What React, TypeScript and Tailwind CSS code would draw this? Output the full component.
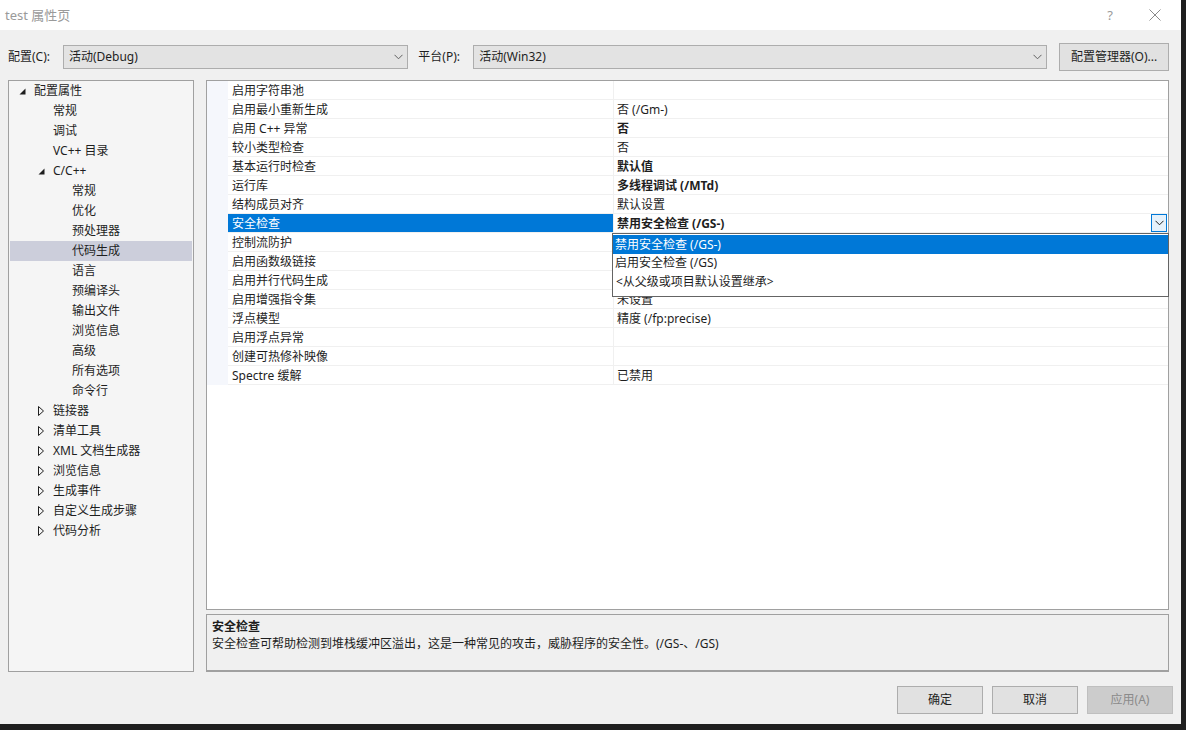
import React from 'react';

type TreeItem = { label: string; level: number; arrow?: 'open' | 'closed'; selected?: boolean };

const treeItems: TreeItem[] = [
  { label: '配置属性', level: 0, arrow: 'open' },
  { label: '常规', level: 1 },
  { label: '调试', level: 1 },
  { label: 'VC++ 目录', level: 1 },
  { label: 'C/C++', level: 1, arrow: 'open' },
  { label: '常规', level: 2 },
  { label: '优化', level: 2 },
  { label: '预处理器', level: 2 },
  { label: '代码生成', level: 2, selected: true },
  { label: '语言', level: 2 },
  { label: '预编译头', level: 2 },
  { label: '输出文件', level: 2 },
  { label: '浏览信息', level: 2 },
  { label: '高级', level: 2 },
  { label: '所有选项', level: 2 },
  { label: '命令行', level: 2 },
  { label: '链接器', level: 1, arrow: 'closed' },
  { label: '清单工具', level: 1, arrow: 'closed' },
  { label: 'XML 文档生成器', level: 1, arrow: 'closed' },
  { label: '浏览信息', level: 1, arrow: 'closed' },
  { label: '生成事件', level: 1, arrow: 'closed' },
  { label: '自定义生成步骤', level: 1, arrow: 'closed' },
  { label: '代码分析', level: 1, arrow: 'closed' },
];

type Prop = { name: string; value: string; bold?: boolean; selected?: boolean };

const props: Prop[] = [
  { name: '启用字符串池', value: '' },
  { name: '启用最小重新生成', value: '否 (/Gm-)' },
  { name: '启用 C++ 异常', value: '否', bold: true },
  { name: '较小类型检查', value: '否' },
  { name: '基本运行时检查', value: '默认值', bold: true },
  { name: '运行库', value: '多线程调试 (/MTd)', bold: true },
  { name: '结构成员对齐', value: '默认设置' },
  { name: '安全检查', value: '禁用安全检查 (/GS-)', bold: true, selected: true },
  { name: '控制流防护', value: '' },
  { name: '启用函数级链接', value: '' },
  { name: '启用并行代码生成', value: '' },
  { name: '启用增强指令集', value: '未设置' },
  { name: '浮点模型', value: '精度 (/fp:precise)' },
  { name: '启用浮点异常', value: '' },
  { name: '创建可热修补映像', value: '' },
  { name: 'Spectre 缓解', value: '已禁用' },
];

const Chevron = ({ color = '#606060' }: { color?: string }) => (
  <svg width="9" height="6" viewBox="0 0 9 6">
    <path d="M0.5 0.8 L4.5 4.8 L8.5 0.8" fill="none" stroke={color} strokeWidth="1" />
  </svg>
);

const Arrow = ({ kind }: { kind: 'open' | 'closed' }) =>
  kind === 'open' ? (
    <svg width="7" height="7" viewBox="0 0 7 7">
      <path d="M6.5 0.5 L6.5 6.5 L0.5 6.5 Z" fill="#1e1e1e" />
    </svg>
  ) : (
    <svg width="6" height="10" viewBox="0 0 6 10">
      <path d="M0.5 0.5 L5.5 5 L0.5 9.5 Z" fill="none" stroke="#1e1e1e" strokeWidth="1" />
    </svg>
  );

function Combo({ value, width }: { value: string; width: string }) {
  return (
    <div className={`${width} h-[24px] flex items-center justify-between bg-[#e3e3e3] border border-[#adadad] pl-[5px] pr-[4px]`}>
      <span>{value}</span>
      <Chevron />
    </div>
  );
}

function Button({ label, disabled }: { label: string; disabled?: boolean }) {
  return (
    <div
      className={
        disabled
          ? 'w-[86px] h-[28px] flex items-center justify-center bg-[#cccccc] border border-[#bfbfbf] text-[#8a8a8a]'
          : 'w-[86px] h-[28px] flex items-center justify-center bg-[#e1e1e1] border border-[#adadad]'
      }
    >
      {label}
    </div>
  );
}

export default function App() {
  return (
    <div
      className="w-[1186px] h-[730px] bg-[#1f1f1f] overflow-hidden text-[12px] text-[#1e1e1e] leading-none"
      style={{ fontFamily: '"Noto Sans", "Noto Sans CJK SC", sans-serif' }}
    >
      <div className="w-[1181px] h-[724px] bg-[#f0f0f0] flex flex-col">
        {/* title bar */}
        <div className="h-[30px] bg-white flex items-center justify-between pl-[5px] pr-[20px]">
          <span className="text-[13px] text-[#9a9a9a]">test 属性页</span>
          <div className="flex items-center gap-[36px] text-[#9a9a9a]">
            <span className="text-[13px]">?</span>
            <svg width="12" height="12" viewBox="0 0 12 12">
              <path d="M0.5 0.5 L11.5 11.5 M11.5 0.5 L0.5 11.5" stroke="#8a8a8a" strokeWidth="1" />
            </svg>
          </div>
        </div>

        {/* config row */}
        <div className="mt-[13px] h-[28px] flex items-center pl-[8px] pr-[12px]">
          <span className="w-[55px]">配置(C):</span>
          <Combo value="活动(Debug)" width="w-[346px]" />
          <span className="ml-[10px] w-[55px]">平台(P):</span>
          <Combo value="活动(Win32)" width="w-[575px]" />
          <div className="ml-[12px] w-[110px] h-[28px] flex items-center justify-center bg-[#e1e1e1] border border-[#adadad]">
            配置管理器(O)...
          </div>
        </div>

        {/* main area */}
        <div className="mt-[9px] h-[592px] flex pl-[8px] pr-[12px] gap-[12px]">
          {/* tree */}
          <div className="w-[186px] h-full bg-[#f5f5f5] border border-[#a0a0a0] flex flex-col px-[1px]">
            {treeItems.map((t, i) => (
              <div
                key={i}
                className={`h-[20px] shrink-0 flex items-center ${t.selected ? 'bg-[#cccedb]' : ''}`}
              >
                <div
                  className={`flex items-center justify-center w-[10px] ${
                    t.level === 0 ? 'ml-[7px]' : t.level === 1 ? 'ml-[26px]' : 'ml-[45px]'
                  }`}
                >
                  {t.arrow && <Arrow kind={t.arrow} />}
                </div>
                <span className="ml-[7px]">{t.label}</span>
              </div>
            ))}
          </div>

          {/* right column */}
          <div className="flex-1 flex flex-col gap-[4px]">
            <div className="relative h-[530px] bg-white border border-[#a0a0a0] shrink-0">
              {props.map((p, i) => (
                <div key={i} className="h-[19px] flex">
                  <div className="w-[21px] bg-[#f5f7fc]" />
                  <div
                    className={`w-[385px] flex items-center pl-[4px] pt-[2px] border-b border-[#f0f0f0] ${
                      p.selected ? 'bg-[#0078d7] text-white border-[#0078d7]' : ''
                    }`}
                  >
                    {p.name}
                  </div>
                  <div className="flex-1 flex items-center justify-between pl-[3px] pr-[1px] border-b border-l border-[#f0f0f0]">
                    <span className={`pt-[2px] ${p.bold ? 'font-bold' : ''}`}>{p.value}</span>
                    {p.selected && (
                      <div className="w-[16px] h-[18px] flex items-center justify-center border border-[#0078d7] bg-[#e5f1fb]">
                        <Chevron color="#1e1e1e" />
                      </div>
                    )}
                  </div>
                </div>
              ))}

              {/* open dropdown list */}
              <div className="absolute left-[405px] top-[152px] w-[557px] h-[64px] bg-white border border-[#646464] pt-[1px]">
                <div className="h-[19px] flex items-center pl-[2px] bg-[#0078d7] text-white">禁用安全检查 (/GS-)</div>
                <div className="h-[18px] flex items-center pl-[2px]">启用安全检查 (/GS)</div>
                <div className="h-[19px] flex items-center pl-[3px]">&lt;从父级或项目默认设置继承&gt;</div>
              </div>
            </div>

            <div className="h-[59px] bg-[#f0f0f0] border border-[#a0a0a0] border-b-2 pl-[5px] pt-[6px] flex flex-col gap-[5px]">
              <span className="font-bold">安全检查</span>
              <span>安全检查可帮助检测到堆栈缓冲区溢出，这是一种常见的攻击，威胁程序的安全性。(/GS-、/GS)</span>
            </div>
          </div>
        </div>

        {/* buttons */}
        <div className="mt-[14px] flex justify-end gap-[9px] pr-[8px]">
          <Button label="确定" />
          <Button label="取消" />
          <Button label="应用(A)" disabled />
        </div>
      </div>
    </div>
  );
}
